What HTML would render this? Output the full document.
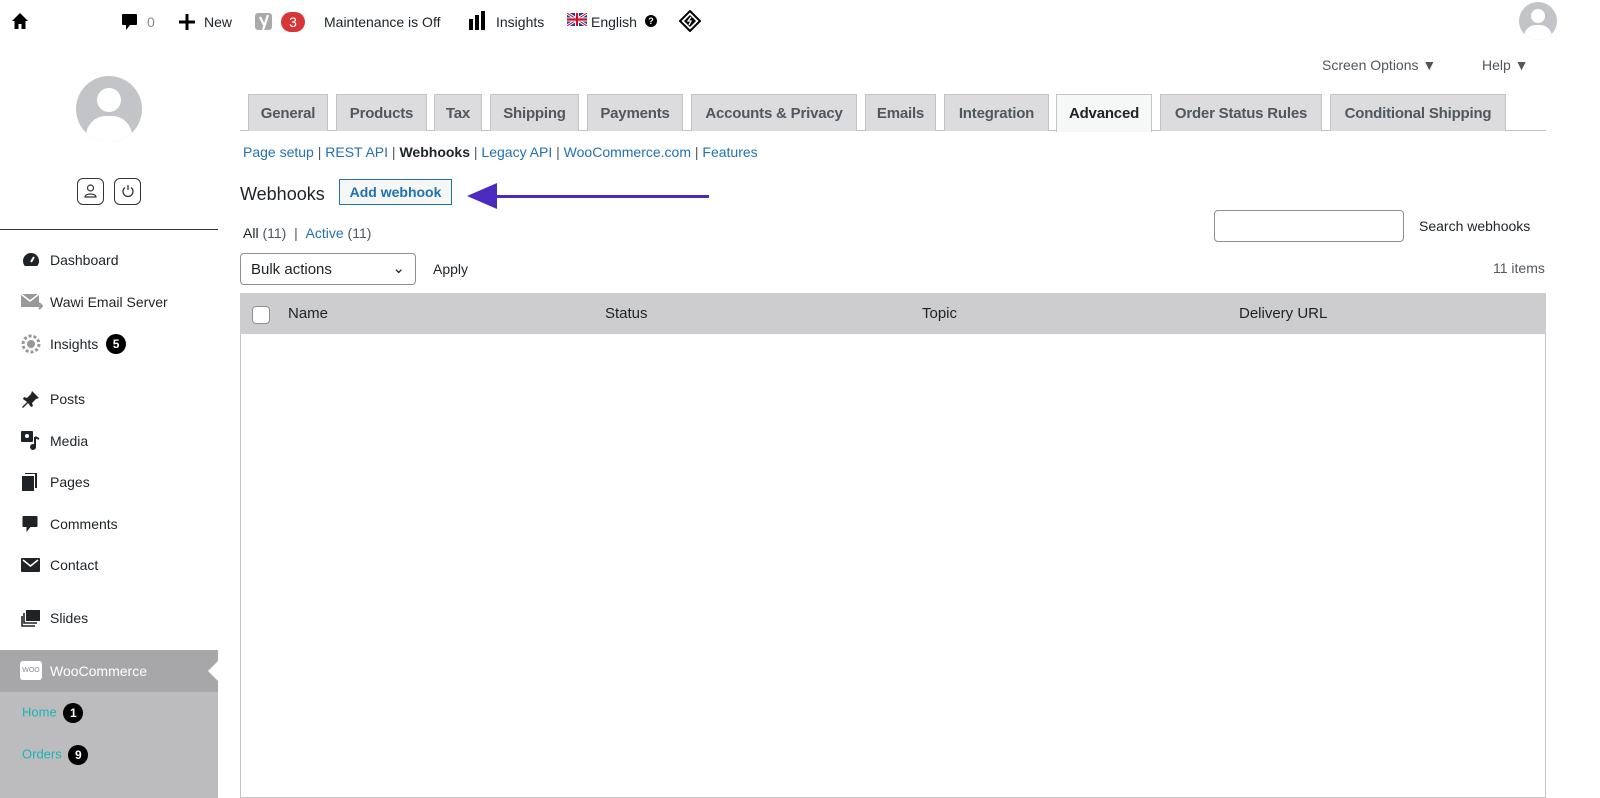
<!DOCTYPE html>
<html><head><meta charset="utf-8"><style>
*{box-sizing:border-box;margin:0;padding:0}
body{width:1600px;height:798px;overflow:hidden;background:#fff;font-family:"Liberation Sans",sans-serif;color:#1d2327;position:relative;font-size:14px}
.a{position:absolute;white-space:nowrap}
.tab{position:absolute;top:94px;height:37px;background:#dcdcde;border:1px solid #c3c4c7;border-bottom:none;font-size:15px;font-weight:bold;color:#50575e;padding-top:10px;text-align:center;white-space:nowrap;overflow:hidden;letter-spacing:-0.2px}
.tab.on{background:#f6f7f7;color:#1d2327;height:38px}
.lnk{color:#2271b1}
.side{font-size:14px;color:#1d2327}
.ic{position:absolute;left:21px}
.badge{display:inline-block;width:20px;height:20px;border-radius:10px;background:#000;color:#fff;font-size:12px;font-weight:bold;text-align:center;line-height:20px;vertical-align:middle}
</style></head><body>
<!-- top bar -->
<svg class="a" style="left:11px;top:12px" width="18" height="18" viewBox="0 0 18 18"><path d="M9 1L1 9h2.5v8h4v-5h3v5h4V9H17z" fill="#000"/></svg>
<svg class="a" style="left:121px;top:13px" width="17" height="18" viewBox="0 0 17 18"><path d="M2 1h13a1 1 0 0 1 1 1v9a1 1 0 0 1-1 1H9l-4 5v-5H2a1 1 0 0 1-1-1V2a1 1 0 0 1 1-1z" fill="#000"/></svg>
<div class="a" style="left:147px;top:14px;color:#888">0</div>
<svg class="a" style="left:179px;top:14px" width="16" height="16" viewBox="0 0 16 16"><path d="M6.5 0h3v6.5H16v3H9.5V16h-3V9.5H0v-3h6.5z" fill="#000"/></svg>
<div class="a" style="left:204px;top:14px">New</div>
<svg class="a" style="left:255px;top:11px" width="19" height="21" viewBox="0 0 19 21"><rect x="0" y="2" width="17" height="17" rx="3" fill="#aaa"/><path d="M5 6l4 8M13 4l-5 15" stroke="#fff" stroke-width="2.2" fill="none"/></svg>
<div class="a" style="left:281px;top:12px;width:24px;height:20px;border-radius:10px;background:#d63638;color:#fff;text-align:center;font-size:14px;line-height:20px">3</div>
<div class="a" style="left:324px;top:14px">Maintenance is Off</div>
<svg class="a" style="left:469px;top:11px" width="18" height="19" viewBox="0 0 18 19"><rect x="0" y="8" width="4" height="11" fill="#000"/><rect x="6" y="4" width="4" height="15" fill="#000"/><rect x="12" y="0" width="4" height="19" fill="#000"/></svg>
<div class="a" style="left:496px;top:14px">Insights</div>
<svg class="a" style="left:567px;top:13px" width="20" height="13" viewBox="0 0 20 13"><rect width="20" height="13" fill="#1d3f8f"/><path d="M0 0L20 13M20 0L0 13" stroke="#fff" stroke-width="3"/><path d="M0 0L20 13M20 0L0 13" stroke="#c8102e" stroke-width="1"/><path d="M10 0v13M0 6.5h20" stroke="#fff" stroke-width="4"/><path d="M10 0v13M0 6.5h20" stroke="#c8102e" stroke-width="2.2"/></svg>
<div class="a" style="left:591px;top:14px">English</div>
<div class="a" style="left:645px;top:15px;width:12px;height:12px;border-radius:6px;background:#000;color:#fff;font-size:9px;text-align:center;line-height:12px;font-weight:bold">?</div>
<svg class="a" style="left:679px;top:10px" width="22" height="22" viewBox="0 0 22 22"><path d="M11 1L21 11L11 21L1 11z" fill="none" stroke="#000" stroke-width="2"/><path d="M11 5L17 11L11 17L5 11z" fill="#000"/><path d="M12 7l-3 4h3l-2 4" stroke="#fff" stroke-width="1.3" fill="none"/></svg>
<div class="a" style="left:1519px;top:2px;width:38px;height:38px;border-radius:19px;background:#c3c4c7;overflow:hidden"><div style="position:absolute;left:12px;top:7px;width:14px;height:14px;border-radius:7px;background:#fff"></div><div style="position:absolute;left:5px;top:23px;width:28px;height:24px;border-radius:14px;background:#fff"></div></div>
<!-- screen options -->
<div class="a" style="left:1322px;top:57px;color:#50575e">Screen Options ▼</div>
<div class="a" style="left:1482px;top:57px;color:#50575e">Help ▼</div>
<!-- sidebar -->
<div class="a" style="left:76px;top:76px;width:66px;height:66px;border-radius:33px;background:#c3c4c7;overflow:hidden"><div style="position:absolute;left:21px;top:12px;width:24px;height:24px;border-radius:12px;background:#fff"></div><div style="position:absolute;left:10px;top:40px;width:46px;height:40px;border-radius:23px;background:#fff"></div></div>
<div class="a" style="left:77px;top:178px;width:27px;height:27px;border:1px solid #333;border-radius:6px"><svg style="position:absolute;left:6px;top:5px" width="13" height="14" viewBox="0 0 13 14"><circle cx="6.5" cy="4" r="3" fill="none" stroke="#333" stroke-width="1.2"/><path d="M1 13c0-4 11-4 11 0z" fill="none" stroke="#333" stroke-width="1.2"/></svg></div>
<div class="a" style="left:114px;top:178px;width:27px;height:27px;border:1px solid #333;border-radius:6px"><svg style="position:absolute;left:6px;top:5px" width="14" height="14" viewBox="0 0 14 14"><path d="M4 3.5a5 5 0 1 0 6 0" fill="none" stroke="#333" stroke-width="1.3"/><path d="M7 1v5" stroke="#333" stroke-width="1.3"/></svg></div>
<div class="a" style="left:0;top:229px;width:218px;height:1px;background:#333"></div>
<svg class="ic" style="top:251px" width="20" height="18" viewBox="0 0 20 18"><path d="M10 2a8 8 0 0 0-8 8c0 2 .7 3.5 1.8 5h12.4A8 8 0 0 0 10 2z" fill="#1d2327"/><path d="M10 11l3-5" stroke="#fff" stroke-width="2"/></svg><div class="a side" style="left:50px;top:252px">Dashboard</div>
<svg class="ic" style="top:293px" width="22" height="18" viewBox="0 0 22 18"><rect x="0" y="1" width="18" height="13" fill="#999"/><path d="M0 1l9 7 9-7" stroke="#fff" stroke-width="1.5" fill="none"/><path d="M15 13h6M18 10l3 3-3 3" stroke="#999" stroke-width="2" fill="none"/></svg><div class="a side" style="left:50px;top:294px">Wawi Email Server</div>
<svg class="ic" style="top:334px" width="20" height="20" viewBox="0 0 20 20"><circle cx="10" cy="10" r="8" fill="none" stroke="#999" stroke-width="3" stroke-dasharray="3 2"/><circle cx="10" cy="10" r="4" fill="#999"/></svg><div class="a side" style="left:50px;top:336px">Insights <span class="badge" style="margin-left:4px;margin-top:-3px">5</span></div>
<svg class="ic" style="top:390px" width="20" height="18" viewBox="0 0 20 18"><path d="M11 1l7 7-3 1-4 4 1 3-2 1-3-4-5 5-1-1 5-5-4-3 1-2 3 1 4-4z" fill="#1d2327"/></svg><div class="a side" style="left:50px;top:391px">Posts</div>
<svg class="ic" style="top:431px" width="20" height="20" viewBox="0 0 20 20"><rect x="0" y="0" width="12" height="11" rx="1" fill="#1d2327"/><circle cx="6" cy="5" r="2" fill="#fff"/><path d="M14 6v10" stroke="#1d2327" stroke-width="2"/><circle cx="12" cy="16" r="3" fill="#1d2327"/><path d="M14 6l4 2" stroke="#1d2327" stroke-width="2"/></svg><div class="a side" style="left:50px;top:433px">Media</div>
<svg class="ic" style="top:473px" width="20" height="20" viewBox="0 0 20 20"><rect x="1" y="3" width="12" height="15" fill="#1d2327"/><path d="M4 0h11v15" stroke="#1d2327" stroke-width="2" fill="none"/></svg><div class="a side" style="left:50px;top:474px">Pages</div>
<svg class="ic" style="top:515px" width="18" height="18" viewBox="0 0 17 18"><path d="M2 1h13a1 1 0 0 1 1 1v9a1 1 0 0 1-1 1H9l-4 5v-5H2a1 1 0 0 1-1-1V2a1 1 0 0 1 1-1z" fill="#1d2327"/></svg><div class="a side" style="left:50px;top:516px">Comments</div>
<svg class="ic" style="top:558px" width="20" height="16" viewBox="0 0 20 16"><rect x="0" y="0" width="19" height="14" rx="1" fill="#1d2327"/><path d="M2 2l7.5 6L17 2" stroke="#fff" stroke-width="1.6" fill="none"/></svg><div class="a side" style="left:50px;top:557px">Contact</div>
<svg class="ic" style="top:610px" width="20" height="18" viewBox="0 0 20 18"><rect x="5" y="0" width="14" height="11" fill="#1d2327"/><path d="M3 3v10h13" stroke="#1d2327" stroke-width="1.6" fill="none"/><path d="M1 6v10h13" stroke="#1d2327" stroke-width="1.6" fill="none"/></svg><div class="a side" style="left:50px;top:610px">Slides</div>
<div class="a" style="left:0;top:650px;width:218px;height:42px;background:#a7a7a9"></div>
<div class="a" style="left:208px;top:661px;width:0;height:0;border-top:10px solid transparent;border-bottom:10px solid transparent;border-right:10px solid #fff"></div>
<div class="a" style="left:20px;top:661px;width:22px;height:19px;background:#fff;border-radius:3px;font-size:7px;color:#888;text-align:center;line-height:19px">WOO</div>
<div class="a" style="left:50px;top:663px;color:#fff;font-size:14px">WooCommerce</div>
<div class="a" style="left:0;top:692px;width:218px;height:106px;background:#bcbcbe"></div>
<div class="a" style="left:22px;top:703px;color:#1bb5b5;font-size:13px">Home <span class="badge" style="margin-left:3px">1</span></div>
<div class="a" style="left:22px;top:745px;color:#1bb5b5;font-size:13px">Orders <span class="badge" style="margin-left:3px">9</span></div>
<!-- tabs -->
<div class="a" style="left:240px;top:130px;width:1306px;height:1px;background:#c3c4c7"></div>
<div class="tab" style="left:248px;width:80px">General</div>
<div class="tab" style="left:336px;width:91px">Products</div>
<div class="tab" style="left:434px;width:48px">Tax</div>
<div class="tab" style="left:490px;width:89px">Shipping</div>
<div class="tab" style="left:587px;width:96px">Payments</div>
<div class="tab" style="left:691px;width:166px">Accounts &amp; Privacy</div>
<div class="tab" style="left:865px;width:71px">Emails</div>
<div class="tab" style="left:944px;width:105px">Integration</div>
<div class="tab on" style="left:1056px;width:96px">Advanced</div>
<div class="tab" style="left:1160px;width:162px">Order Status Rules</div>
<div class="tab" style="left:1330px;width:176px">Conditional Shipping</div>
<div class="a" style="left:243px;top:144px;color:#50575e"><span class="lnk">Page setup</span> | <span class="lnk">REST API</span> | <b style="color:#1d2327">Webhooks</b> | <span class="lnk">Legacy API</span> | <span class="lnk">WooCommerce.com</span> | <span class="lnk">Features</span></div>
<div class="a" style="left:240px;top:184px;font-size:18px">Webhooks</div>
<div class="a" style="left:339px;top:179px;width:113px;height:26px;border:1px solid #2271b1;background:#f6f7f7;color:#2271b1;font-weight:bold;text-align:center;line-height:24px">Add webhook</div>
<div class="a" style="left:467px;top:183px;width:0;height:0;border-top:13px solid transparent;border-bottom:13px solid transparent;border-right:30px solid #4b2bbd"></div>
<div class="a" style="left:495px;top:195px;width:214px;height:3px;background:#4b2bbd"></div>
<div class="a" style="left:243px;top:225px;color:#50575e"><span style="color:#1d2327">All</span> (11) &nbsp;| &nbsp;<span class="lnk">Active</span> (11)</div>
<div class="a" style="left:1214px;top:210px;width:190px;height:32px;border:1px solid #8c8f94;border-radius:4px"></div>
<div class="a" style="left:1419px;top:218px">Search webhooks</div>
<div class="a" style="left:240px;top:253px;width:176px;height:32px;border:1px solid #8c8f94;border-radius:4px;padding:7px 10px;font-size:15px">Bulk actions<span style="position:absolute;right:10px;top:5px">⌄</span></div>
<div class="a" style="left:433px;top:261px">Apply</div>
<div class="a" style="left:1493px;top:260px;color:#50575e">11 items</div>
<div class="a" style="left:240px;top:293px;width:1306px;height:505px;border:1px solid #c3c4c7"></div>
<div class="a" style="left:240px;top:293px;width:1306px;height:41px;background:#cdcdcf"></div>
<div class="a" style="left:252px;top:306px;width:18px;height:18px;background:#fff;border:1px solid #8c8f94;border-radius:4px"></div>
<div class="a" style="left:288px;top:305px;font-size:15px">Name</div>
<div class="a" style="left:605px;top:305px;font-size:15px">Status</div>
<div class="a" style="left:922px;top:305px;font-size:15px">Topic</div>
<div class="a" style="left:1239px;top:305px;font-size:15px">Delivery URL</div>
</body></html>
